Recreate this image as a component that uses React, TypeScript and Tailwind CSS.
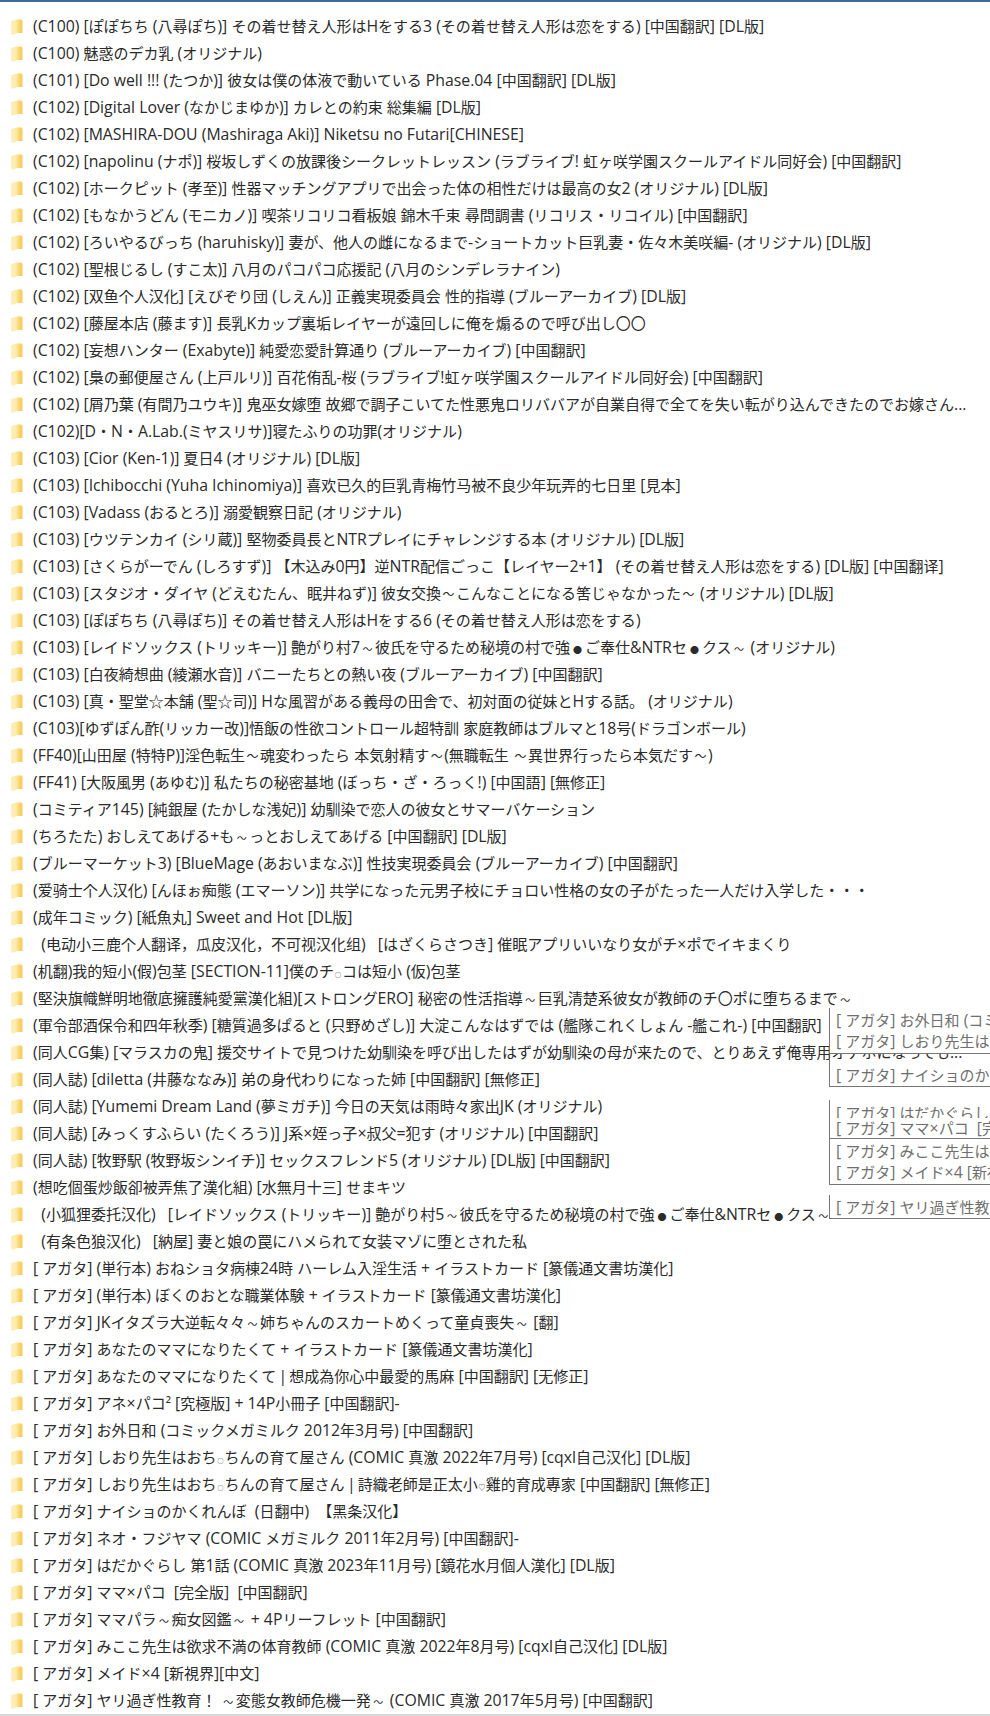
import type { ReactNode } from "react";

const rows: string[] = [
  "(C100) [ぽぽちち (八尋ぽち)] その着せ替え人形はHをする3 (その着せ替え人形は恋をする) [中国翻訳] [DL版]",
  "(C100) 魅惑のデカ乳 (オリジナル)",
  "(C101) [Do well !!! (たつか)] 彼女は僕の体液で動いている Phase.04 [中国翻訳] [DL版]",
  "(C102) [Digital Lover (なかじまゆか)] カレとの約束 総集編 [DL版]",
  "(C102) [MASHIRA-DOU (Mashiraga Aki)] Niketsu no Futari[CHINESE]",
  "(C102) [napolinu (ナポ)] 桜坂しずくの放課後シークレットレッスン (ラブライブ! 虹ヶ咲学園スクールアイドル同好会) [中国翻訳]",
  "(C102) [ホークピット (孝至)] 性器マッチングアプリで出会った体の相性だけは最高の女2 (オリジナル) [DL版]",
  "(C102) [もなかうどん (モニカノ)] 喫茶リコリコ看板娘 錦木千束 尋問調書 (リコリス・リコイル) [中国翻訳]",
  "(C102) [ろいやるびっち (haruhisky)] 妻が、他人の雌になるまで-ショートカット巨乳妻・佐々木美咲編- (オリジナル) [DL版]",
  "(C102) [聖根じるし (すこ太)] 八月のパコパコ応援記 (八月のシンデレラナイン)",
  "(C102) [双鱼个人汉化] [えびぞり団 (しえん)] 正義実現委員会 性的指導 (ブルーアーカイブ) [DL版]",
  "(C102) [藤屋本店 (藤ます)] 長乳Kカップ裏垢レイヤーが遠回しに俺を煽るので呼び出し〇〇",
  "(C102) [妄想ハンター (Exabyte)] 純愛恋愛計算通り (ブルーアーカイブ) [中国翻訳]",
  "(C102) [梟の郵便屋さん (上戸ルリ)] 百花侑乱-桜 (ラブライブ!虹ヶ咲学園スクールアイドル同好会) [中国翻訳]",
  "(C102) [屑乃葉 (有間乃ユウキ)] 鬼巫女嫁堕 故郷で調子こいてた性悪鬼ロリババアが自業自得で全てを失い転がり込んできたのでお嫁さん...",
  "(C102)[D・N・A.Lab.(ミヤスリサ)]寝たふりの功罪(オリジナル)",
  "(C103) [Cior (Ken-1)] 夏日4 (オリジナル) [DL版]",
  "(C103) [Ichibocchi (Yuha Ichinomiya)] 喜欢已久的巨乳青梅竹马被不良少年玩弄的七日里 [見本]",
  "(C103) [Vadass (おるとろ)] 溺愛観察日記 (オリジナル)",
  "(C103) [ウツテンカイ (シリ蔵)] 堅物委員長とNTRプレイにチャレンジする本 (オリジナル) [DL版]",
  "(C103) [さくらがーでん (しろすず)] 【木込み0円】逆NTR配信ごっこ【レイヤー2+1】 (その着せ替え人形は恋をする) [DL版] [中国翻译]",
  "(C103) [スタジオ・ダイヤ (どえむたん、眠井ねず)] 彼女交換〜こんなことになる筈じゃなかった〜 (オリジナル) [DL版]",
  "(C103) [ぽぽちち (八尋ぽち)] その着せ替え人形はHをする6 (その着せ替え人形は恋をする)",
  "(C103) [レイドソックス (トリッキー)] 艶がり村7～彼氏を守るため秘境の村で強●ご奉仕&NTRセ●クス～ (オリジナル)",
  "(C103) [白夜綺想曲 (綾瀬水音)] バニーたちとの熱い夜 (ブルーアーカイブ) [中国翻訳]",
  "(C103) [真・聖堂☆本舗 (聖☆司)] Hな風習がある義母の田舎で、初対面の従妹とHする話。 (オリジナル)",
  "(C103)[ゆずぽん酢(リッカー改)]悟飯の性欲コントロール超特訓 家庭教師はブルマと18号(ドラゴンボール)",
  "(FF40)[山田屋 (特特P)]淫色転生〜魂変わったら 本気射精す〜(無職転生 〜異世界行ったら本気だす〜)",
  "(FF41) [大阪風男 (あゆむ)] 私たちの秘密基地 (ぼっち・ざ・ろっく!) [中国語] [無修正]",
  "(コミティア145) [純銀屋 (たかしな浅妃)] 幼馴染で恋人の彼女とサマーバケーション",
  "(ちろたた) おしえてあげる+も～っとおしえてあげる [中国翻訳] [DL版]",
  "(ブルーマーケット3) [BlueMage (あおいまなぶ)] 性技実現委員会 (ブルーアーカイブ) [中国翻訳]",
  "(爱骑士个人汉化) [んほぉ痴態 (エマーソン)] 共学になった元男子校にチョロい性格の女の子がたった一人だけ入学した・・・",
  "(成年コミック) [紙魚丸] Sweet and Hot [DL版]",
  "\u00a0\u00a0(电动小三鹿个人翻译，瓜皮汉化，不可视汉化组) \u00a0 [はざくらさつき] 催眠アプリいいなり女がチ×ポでイキまくり",
  "(机翻)我的短小(假)包茎 [SECTION-11]僕のチ○コは短小 (仮)包茎",
  "(堅決旗幟鮮明地徹底擁護純愛黨漢化組)[ストロングERO] 秘密の性活指導～巨乳清楚系彼女が教師のチ〇ポに堕ちるまで～",
  "(軍令部酒保令和四年秋季) [糖質過多ぱると (只野めざし)] 大淀こんなはずでは (艦隊これくしょん -艦これ-) [中国翻訳]",
  "(同人CG集) [マラスカの鬼] 援交サイトで見つけた幼馴染を呼び出したはずが幼馴染の母が来たので、とりあえず俺専用オナホになっても...",
  "(同人誌) [diletta (井藤ななみ)] 弟の身代わりになった姉 [中国翻訳] [無修正]",
  "(同人誌) [Yumemi Dream Land (夢ミガチ)] 今日の天気は雨時々家出JK (オリジナル)",
  "(同人誌) [みっくすふらい (たくろう)] J系×姪っ子×叔父=犯す (オリジナル) [中国翻訳]",
  "(同人誌) [牧野駅 (牧野坂シンイチ)] セックスフレンド5 (オリジナル) [DL版] [中国翻訳]",
  "(想吃個蛋炒飯卻被弄焦了漢化組) [水無月十三] せまキツ",
  "\u00a0\u00a0(小狐狸委托汉化) \u00a0 [レイドソックス (トリッキー)] 艶がり村5～彼氏を守るため秘境の村で強●ご奉仕&NTRセ●クス～",
  "\u00a0\u00a0(有条色狼汉化) \u00a0 [納屋] 妻と娘の罠にハメられて女装マゾに堕とされた私",
  "[ アガタ] (単行本) おねショタ病棟24時 ハーレム入淫生活 + イラストカード [篆儀通文書坊漢化]",
  "[ アガタ] (単行本) ぼくのおとな職業体験 + イラストカード [篆儀通文書坊漢化]",
  "[ アガタ] JKイタズラ大逆転々々～姉ちゃんのスカートめくって童貞喪失～ [翻]",
  "[ アガタ] あなたのママになりたくて + イラストカード [篆儀通文書坊漢化]",
  "[ アガタ] あなたのママになりたくて | 想成為你心中最愛的馬麻 [中国翻訳] [无修正]",
  "[ アガタ] アネ×パコ² [究極版] + 14P小冊子 [中国翻訳]-",
  "[ アガタ] お外日和 (コミックメガミルク 2012年3月号) [中国翻訳]",
  "[ アガタ] しおり先生はおち○ちんの育て屋さん (COMIC 真激 2022年7月号) [cqxl自己汉化] [DL版]",
  "[ アガタ] しおり先生はおち○ちんの育て屋さん | 詩織老師是正太小♡雞的育成專家 [中国翻訳] [無修正]",
  "[ アガタ] ナイショのかくれんぼ \u00a0(日翻中) \u00a0【黑条汉化】",
  "[ アガタ] ネオ・フジヤマ (COMIC メガミルク 2011年2月号) [中国翻訳]-",
  "[ アガタ] はだかぐらし 第1話 (COMIC 真激 2023年11月号) [鏡花水月個人漢化] [DL版]",
  "[ アガタ] ママ×パコ \u00a0[完全版] \u00a0[中国翻訳]",
  "[ アガタ] ママパラ～痴女図鑑～ + 4Pリーフレット [中国翻訳]",
  "[ アガタ] みここ先生は欲求不満の体育教師 (COMIC 真激 2022年8月号) [cqxl自己汉化] [DL版]",
  "[ アガタ] メイド×4 [新視界][中文]",
  "[ アガタ] ヤリ過ぎ性教育！ ～変態女教師危機一発～ (COMIC 真激 2017年5月号) [中国翻訳]",
];

const small = /^[～〜●○♡|]$/;
const cjk = /^[\u3000-\u30ff\u3400-\u9fff\uff00-\uffef☆²]/;

const cell: Record<string, string> = {
  "○": "inline-block w-[8px] text-center text-[6px] leading-none",
  "♡": "inline-block w-[8px] text-center text-[7px] leading-none",
  "●": "inline-block w-[15px] text-center text-[9px] leading-none",
  "～": "inline-block w-[15px] text-center text-[10px] leading-none",
  "〜": "inline-block w-[15px] text-center text-[12px] leading-none",
  "|": "inline-flex w-[5px] justify-center leading-none",
};

// Latin and CJK runs have different sizes in the picture; small glyphs sit in their own cell.
function Mixed({ text }: { text: string }) {
  const parts = text
    .split(/([～〜●○♡|])/)
    .flatMap((s) => (small.test(s) ? [s] : s.split(/([\u3000-\u30ff\u3400-\u9fff\uff00-\uffef☆²]+)/)))
    .filter(Boolean);
  const out: ReactNode[] = parts.map((p, i) => {
    if (small.test(p)) {
      return (
        <span key={i} className={cell[p]}>
          {p}
        </span>
      );
    }
    if (cjk.test(p)) {
      return (
        <span key={i} className="text-[15px]">
          {p}
        </span>
      );
    }
    return <span key={i}>{p}</span>;
  });
  return <>{out}</>;
}

function Folder({ id }: { id: number }) {
  const g = `fg${id}`;
  return (
    <svg width="13" height="16" viewBox="0 0 13 16" className="shrink-0">
      <defs>
        <linearGradient id={g} x1="0" y1="0" x2="1" y2="0">
          <stop offset="0" stopColor="#fdf0c0" />
          <stop offset="0.45" stopColor="#fdeaa8" />
          <stop offset="0.7" stopColor="#fad56e" />
          <stop offset="1" stopColor="#f6c959" />
        </linearGradient>
      </defs>
      <path d="M1 2 L7 0.5 L11.5 0.5 L12.5 2 L12.5 14 L7 14 L4 15.5 L1 15.5 Z" fill={`url(#${g})`} />
    </svg>
  );
}

function OverlayLine({ text, className = "" }: { text: string; className?: string }) {
  return (
    <div className={"whitespace-pre bg-white pl-[6px] text-[#6f6f6f] " + className}>
      <Mixed text={text} />
    </div>
  );
}

const box = "absolute left-[829px] w-[161px] overflow-hidden border-b border-l border-[#777] bg-white leading-[24px]";

export default function App() {
  return (
    <div
      className="relative h-[1716px] w-[990px] overflow-hidden bg-white text-[15.8px] text-[#2a2a2a]"
      style={{ fontFamily: '"Open Sans", "Noto Sans CJK JP", sans-serif' }}
    >
      <div className="h-[2px] bg-[#3d6a9e]" />
      <div className="pt-[11px]">
        {rows.map((t, i) => (
          <div key={i} className="flex h-[27px] items-center gap-[10px] pl-[10px]">
            <div className="flex w-[13px] shrink-0">
              <Folder id={i} />
            </div>
            <div className="whitespace-pre leading-[27px]">
              <Mixed text={t} />
            </div>
          </div>
        ))}
      </div>

      <div className={box + " top-[1008px] h-[46px]"}>
        <OverlayLine text="[ アガタ] お外日和 (コミックメガ" />
        <OverlayLine className="-mt-[3px]" text="[ アガタ] しおり先生はおち" />
      </div>
      <div className={box + " top-[1060px] h-[27px] pt-[3px]"}>
        <OverlayLine text="[ アガタ] ナイショのかくれ" />
      </div>
      <div className={box + " top-[1100px] h-[39px] pt-[1px]"}>
        <OverlayLine className="h-[17px]" text="[ アガタ] はだかぐらし 第1" />
        <OverlayLine className="relative leading-[20px]" text={"[ アガタ] ママ×パコ \u00a0[完全"} />
      </div>
      <div className={box + " top-[1139px] h-[46px]"}>
        <OverlayLine text="[ アガタ] みここ先生は欲求" />
        <OverlayLine className="-mt-[3px]" text="[ アガタ] メイド×4 [新視界" />
      </div>
      <div className={box + " top-[1195px] h-[24px]"}>
        <OverlayLine text="[ アガタ] ヤリ過ぎ性教育！" />
      </div>
      <div className="absolute bottom-0 left-0 h-[2px] w-full bg-[#d8d8d8]" />
    </div>
  );
}
